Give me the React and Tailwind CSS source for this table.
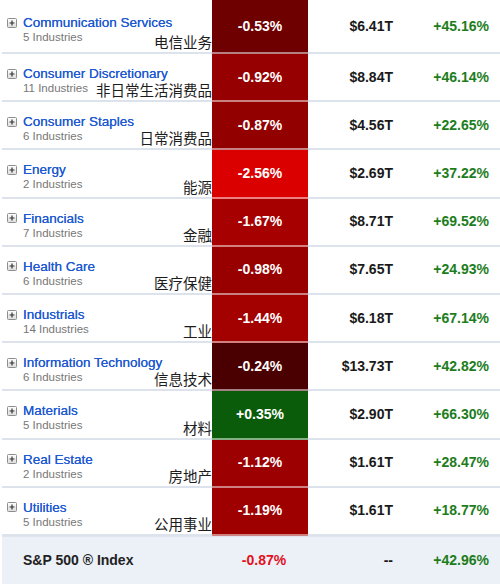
import React from 'react';

const sectors = [
  { name: 'Communication Services', count: 5, zh: '电信业务', chg: '-0.53%', bg: 'bg-[#6e0000]', cap: '$6.41T', ytd: '+45.16%' },
  { name: 'Consumer Discretionary', count: 11, zh: '非日常生活消费品', chg: '-0.92%', bg: 'bg-[#970000]', cap: '$8.84T', ytd: '+46.14%' },
  { name: 'Consumer Staples', count: 6, zh: '日常消费品', chg: '-0.87%', bg: 'bg-[#930000]', cap: '$4.56T', ytd: '+22.65%' },
  { name: 'Energy', count: 2, zh: '能源', chg: '-2.56%', bg: 'bg-[#db0000]', cap: '$2.69T', ytd: '+37.22%' },
  { name: 'Financials', count: 7, zh: '金融', chg: '-1.67%', bg: 'bg-[#a60000]', cap: '$8.71T', ytd: '+69.52%' },
  { name: 'Health Care', count: 6, zh: '医疗保健', chg: '-0.98%', bg: 'bg-[#980000]', cap: '$7.65T', ytd: '+24.93%' },
  { name: 'Industrials', count: 14, zh: '工业', chg: '-1.44%', bg: 'bg-[#a30000]', cap: '$6.18T', ytd: '+67.14%' },
  { name: 'Information Technology', count: 6, zh: '信息技术', chg: '-0.24%', bg: 'bg-[#4a0000]', cap: '$13.73T', ytd: '+42.82%' },
  { name: 'Materials', count: 5, zh: '材料', chg: '+0.35%', bg: 'bg-[#0a5c0a]', cap: '$2.90T', ytd: '+66.30%' },
  { name: 'Real Estate', count: 2, zh: '房地产', chg: '-1.12%', bg: 'bg-[#9c0000]', cap: '$1.61T', ytd: '+28.47%' },
  { name: 'Utilities', count: 5, zh: '公用事业', chg: '-1.19%', bg: 'bg-[#9e0000]', cap: '$1.61T', ytd: '+18.77%' },
];

const PlusBox = () => (
  <svg width="10" height="10" viewBox="0 0 10 10" className="shrink-0">
    <defs>
      <linearGradient id="pb" x1="0" y1="0" x2="0" y2="1">
        <stop offset="0" stopColor="#ffffff" />
        <stop offset="1" stopColor="#dcdcdc" />
      </linearGradient>
    </defs>
    <rect x="0.5" y="0.5" width="9" height="9" rx="1" fill="url(#pb)" stroke="#8e8e8e" />
    <path d="M2.5 5h5M5 2.5v5" stroke="#333" strokeWidth="1.2" />
  </svg>
);

export default function App() {
  return (
    <div className="w-[500px] h-[584px] bg-white pl-[2px] overflow-hidden font-['Liberation_Sans','Noto_Sans_CJK_SC',sans-serif]">
      {sectors.map((s, i) => (
        <div key={s.name} className={`flex ${i === 0 ? 'h-[54px]' : 'h-[48.2px]'}`}>
          <div className="relative w-[210px] border-b-2 border-[#dde3ec] flex flex-col justify-center pt-[7px] pl-[5px]">
            <div className="flex items-center gap-[6px]">
              <PlusBox />
              <span className="text-[13.5px] text-[#1f5ad0] leading-[15px] [text-shadow:0_0_0.4px_#1f5ad0]">{s.name}</span>
            </div>
            <div className="pl-[16px] text-[11.5px] text-[#777] leading-[13px] mt-[1px]">{s.count} Industries</div>
            <div className="absolute right-0 bottom-0 text-[14.5px] leading-[18px] text-[#1c1c1c]">{s.zh}</div>
          </div>
          <div className={`w-[96px] ${s.bg} border-b-2 border-white/50 flex items-center justify-center text-[14px] font-bold text-white`}>
            {s.chg}
          </div>
          <div className="w-[96px] border-b-2 border-[#dde3ec] flex items-center justify-end pr-[11px] text-[14px] font-bold text-[#1a1a1a]">
            {s.cap}
          </div>
          <div className="flex-1 border-b-2 border-[#dde3ec] flex items-center justify-end pr-[11px] text-[14px] font-bold text-[#1d7d1d]">
            {s.ytd}
          </div>
        </div>
      ))}
      <div className="flex h-[48px] bg-[#ecf0f7] border-t border-[#dfe5ee] text-[14px] font-bold">
        <div className="w-[210px] flex items-center pl-[21px] text-[#222]">S&amp;P 500 ® Index</div>
        <div className="w-[96px] flex items-center justify-center pl-[8px] text-[#e3101c]">-0.87%</div>
        <div className="w-[96px] flex items-center justify-end pr-[11px] text-[#1a1a1a]">--</div>
        <div className="flex-1 flex items-center justify-end pr-[11px] text-[#1d7d1d]">+42.96%</div>
      </div>
    </div>
  );
}
